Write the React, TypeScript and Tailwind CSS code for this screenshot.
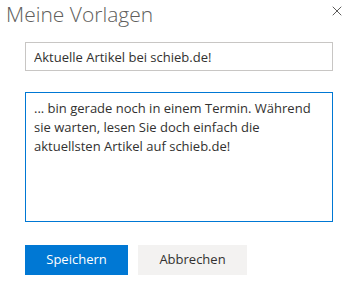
import { X } from 'lucide-react'

export default function App() {
  return (
    <div className="w-[351px] h-[283px] bg-white relative font-['Segoe_UI','Open_Sans',sans-serif] text-[#323130]">
      <div className="flex items-start justify-between pl-[6px] pr-[6px] pt-[0px]">
        <h1 className="text-[21px] font-light text-[#605e5c] leading-[28px]">Meine Vorlagen</h1>
        <button className="mt-[3px] text-[#323130]" title="Schließen">
          <X className="w-[16px] h-[16px]" strokeWidth={1.2} />
        </button>
      </div>
      <div className="pl-[25px] pr-[18px] pt-[14px] flex flex-col">
        <input
          className="h-[29px] w-[308px] border border-[#c8c6c4] px-[8px] text-[13px] outline-none text-[#323130]"
          defaultValue="Aktuelle Artikel bei schieb.de!"
        />
        <textarea
          className="mt-[21px] h-[130px] w-[308px] border border-[#0078d4] px-[8px] py-[6px] text-[13px] leading-[19px] outline-none resize-none text-[#323130]"
          defaultValue="... bin gerade noch in einem Termin. Während sie warten, lesen Sie doch einfach die aktuellsten Artikel auf schieb.de!"
        />
        <div className="flex gap-[10px] mt-[23px]">
          <button className="w-[103px] h-[30px] bg-[#0078d4] text-white text-[13px]">Speichern</button>
          <button className="w-[109px] h-[30px] bg-[#f3f2f1] text-[#323130] text-[13px]">Abbrechen</button>
        </div>
      </div>
    </div>
  )
}
